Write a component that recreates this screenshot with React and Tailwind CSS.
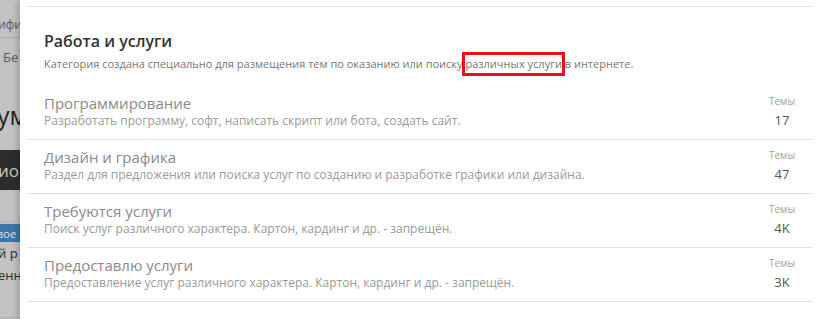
const rows = [
  {
    title: 'Программирование',
    desc: 'Разработать программу, софт, написать скрипт или бота, создать сайт.',
    count: '17',
  },
  {
    title: 'Дизайн и графика',
    desc: 'Раздел для предложения или поиска услуг по созданию и разработке графики или дизайна.',
    count: '47',
  },
  {
    title: 'Требуются услуги',
    desc: 'Поиск услуг различного характера. Картон, кардинг и др. - запрещён.',
    count: '4K',
  },
  {
    title: 'Предоставлю услуги',
    desc: 'Предоставление услуг различного характера. Картон, кардинг и др. - запрещён.',
    count: '3K',
  },
];

function BackdropStrip() {
  return (
    <div className="w-[20px] shrink-0 overflow-hidden bg-[#c2c2c2] text-[#5a5a5a] whitespace-nowrap flex flex-col">
      <div className="h-[13px]" />
      <div className="h-[25px] flex items-center text-[12px] leading-none border-b border-[#acacac] -ml-[2px]">
        ифи
      </div>
      <div className="h-[36px] flex items-center text-[13px] leading-none pl-[3px] pt-[2px]">Бе</div>
      <div className="h-[76px] flex items-center text-[25px] leading-none text-[#252525] -ml-[3px] pt-[6px]">
        ум
      </div>
      <div className="h-[40px] flex items-center bg-[#2d2d2d] text-[#c9c9c9] text-[17px] leading-none -ml-[2px]">
        ио
      </div>
      <div className="h-[32px] border-b border-[#b3b3b3]" />
      <div className="h-[18px] flex items-center bg-[#3b74a6] text-[#dfe8f0] text-[11px] leading-none -ml-[3px] mt-[2px]">
        вое
      </div>
      <div className="h-[22px] flex items-center text-[13px] leading-none text-[#2a2a2a] -ml-[2px]">й р</div>
      <div className="h-[22px] flex items-center text-[13px] leading-none text-[#2a2a2a] -ml-[2px]">енн</div>
      <div className="h-[32px] border-b border-[#adadad]" />
    </div>
  );
}

export default function App() {
  return (
    <div
      className="w-[816px] h-[319px] overflow-hidden flex bg-[#c2c2c2]"
      style={{ fontFamily: '"Open Sans", "Noto Sans", sans-serif' }}
    >
      <BackdropStrip />
      <div className="flex-1 bg-white shadow-[-3px_0_6px_rgba(0,0,0,0.18)] pl-2 pr-1 pt-[6px]">
        <div className="border-t border-[#e2e2e2]">
          <div className="pl-4 pt-[23px] pb-[14px]">
            <h1 className="text-[16px] leading-[22px] font-semibold text-[#333]">Работа и услуги</h1>
            <div className="relative">
              <p className="text-[11px] leading-[16px] text-[#777] mt-[4px]">
                Категория создана специально для размещения тем по оказанию или поиску различных услуги в интернете.
              </p>
              <div className="absolute left-[418px] -top-[4px] w-[103px] h-[24px] border-[3px] border-[#e5121a]" />
            </div>
          </div>

          {rows.map((row) => (
            <div key={row.title} className="flex items-start justify-between border-b border-[#e0e0e0] pl-4 pr-[15px] pt-[8px] h-[54px]">
              <div>
                <div className="text-[15px] leading-[18px] text-[#8a8a8a]">{row.title}</div>
                <div className="text-[12px] leading-[17px] text-[#9a9a9a]">{row.desc}</div>
              </div>
              <div className="flex flex-col items-center w-[30px]">
                <span className="text-[10px] leading-[14px] text-[#a0a0a0]">Темы</span>
                <span className="text-[13px] leading-[16px] text-[#555] mt-[4px]">{row.count}</span>
              </div>
            </div>
          ))}
        </div>
      </div>
    </div>
  );
}
